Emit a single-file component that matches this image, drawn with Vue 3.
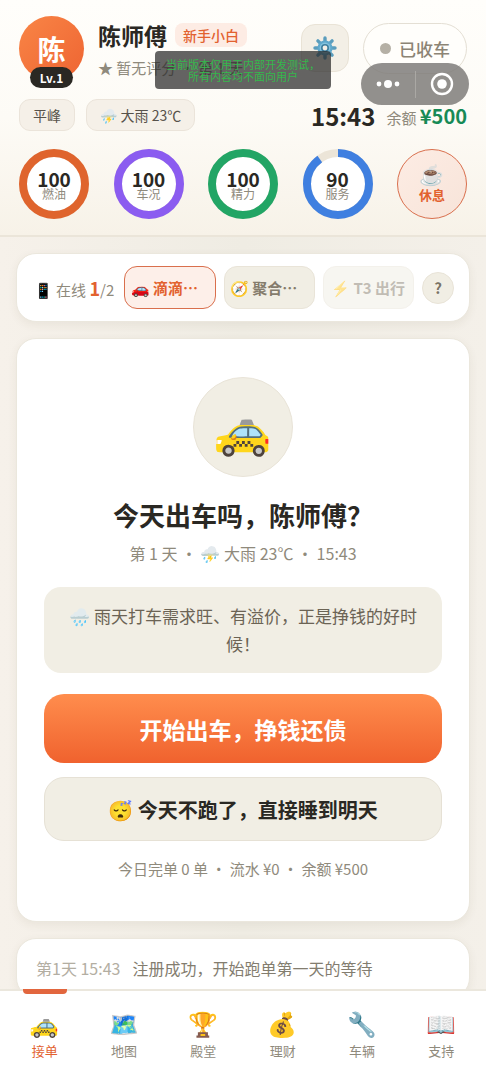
<template>
  <div class="app">
    <header class="top">
      <div class="profile">
        <div class="avatar">
          陈
          <span class="level">Lv.1</span>
        </div>
        <div class="who">
          <div class="name-row">
            <h1 class="name">{{ name }}</h1>
            <span class="badge">新手小白</span>
          </div>
          <p class="rating">★ 暂无评分 · 第 1 天</p>
        </div>
        <button class="setting" type="button" aria-label="设置">
          <svg width="24" height="24" viewBox="0 0 24 24">
            <g stroke="#5a9dbd" stroke-width="3.4" stroke-linecap="round">
              <path d="M12 2V22M2 12H22M4.9 4.9L19.1 19.1M19.1 4.9L4.9 19.1" />
            </g>
            <circle cx="12" cy="12" r="7.6" fill="#5fa8cc" />
            <circle cx="12" cy="12" r="5.4" fill="#84c3de" />
            <circle cx="12" cy="12" r="4" fill="#3f7f9f" />
            <circle cx="12" cy="12" r="2.4" fill="#f3efe6" />
          </svg>
        </button>
        <button class="status" type="button" @click="working = !working">
          <span class="dot" :class="{ on: working }"></span>{{ working ? '出车中' : '已收车' }}
        </button>
      </div>

      <div class="info">
        <span class="pill">平峰</span>
        <span class="pill">{{ weather }}</span>
        <span class="clock">{{ time }}</span>
        <span class="money">余额 <b>¥{{ balance }}</b></span>
      </div>

      <div class="rings">
        <div v-for="r in rings" :key="r.label" class="ring">
          <svg viewBox="0 0 70 70" class="ring-svg">
            <circle cx="35" cy="35" r="31" fill="#fff" stroke="#ece5d8" stroke-width="8" />
            <circle cx="35" cy="35" r="31" fill="none" :stroke="r.color" stroke-width="8" pathLength="100"
              :stroke-dasharray="r.value + ' 100'" transform="rotate(-90 35 35)" />
          </svg>
          <strong class="ring-num">{{ r.value }}</strong>
          <span class="ring-label">{{ r.label }}</span>
        </div>
        <button class="rest" type="button">
          <span class="rest-icon">☕</span>
          <span class="rest-text">休息</span>
        </button>
      </div>

      <!-- 小程序浮层 -->
      <div class="notice">当前版本仅用于内部开发测试，<br>所有内容均不面向用户</div>
      <div class="capsule">
        <button class="cap-btn" type="button" aria-label="更多">
          <svg width="24" height="12" viewBox="0 0 24 12">
            <circle cx="3" cy="6" r="2.4" fill="#fff" />
            <circle cx="12" cy="6" r="4" fill="#fff" />
            <circle cx="21" cy="6" r="2.4" fill="#fff" />
          </svg>
        </button>
        <span class="cap-line"></span>
        <button class="cap-btn" type="button" aria-label="关闭">
          <svg width="24" height="24" viewBox="0 0 24 24">
            <circle cx="12" cy="12" r="10" fill="none" stroke="#fff" stroke-width="2.4" />
            <circle cx="12" cy="12" r="4.8" fill="#fff" />
          </svg>
        </button>
      </div>
    </header>

    <main class="content">
      <section class="card platforms">
        <span class="online">📱 在线 <b>1</b>/2</span>
        <button v-for="p in platforms" :key="p.text" type="button" class="chip" :class="p.state">
          <span class="chip-icon">{{ p.icon }}</span>{{ p.text }}
        </button>
        <button class="help" type="button">?</button>
      </section>

      <section class="card hero">
        <div class="hero-icon">🚕</div>
        <h2 class="hero-title">今天出车吗，{{ name }}？</h2>
        <p class="hero-sub">第 1 天 · {{ weather }} · {{ time }}</p>
        <p class="tip">🌧️ 雨天打车需求旺、有溢价，正是挣钱的好时候！</p>
        <button class="btn primary" type="button" @click="working = true">开始出车，挣钱还债</button>
        <button class="btn plain" type="button">😴 今天不跑了，直接睡到明天</button>
        <p class="today">今日完单 0 单 · 流水 ¥0 · 余额 ¥{{ balance }}</p>
      </section>

      <section class="card log">
        <span class="log-time">第1天 {{ time }}</span>
        <span>注册成功，开始跑单第一天的等待</span>
      </section>
    </main>

    <nav class="tabs">
      <button v-for="(t, i) in tabs" :key="t.label" type="button" class="tab" :class="{ active: current === i }"
        @click="current = i">
        <span class="tab-icon">{{ t.icon }}</span>
        <span>{{ t.label }}</span>
      </button>
    </nav>
  </div>
</template>

<script setup>
import { ref } from 'vue';

const name = ref('陈师傅');
const weather = ref('⛈️ 大雨 23℃');
const time = ref('15:43');
const balance = ref(500);
const working = ref(false);
const current = ref(0);

const rings = ref([
  { label: '燃油', value: 100, color: '#df642d' },
  { label: '车况', value: 100, color: '#8b5cf0' },
  { label: '精力', value: 100, color: '#22a565' },
  { label: '服务', value: 90, color: '#3f7fe0' },
]);

const platforms = [
  { icon: '🚗', text: '滴滴…', state: 'on' },
  { icon: '🧭', text: '聚合…', state: '' },
  { icon: '⚡', text: 'T3 出行', state: 'locked' },
];

const tabs = [
  { icon: '🚕', label: '接单' },
  { icon: '🗺️', label: '地图' },
  { icon: '🏆', label: '殿堂' },
  { icon: '💰', label: '理财' },
  { icon: '🔧', label: '车辆' },
  { icon: '📖', label: '支持' },
];
</script>

<style>
body {
  margin: 0;
  background: #f3efe7;
}
</style>

<style scoped>
.app {
  display: flex;
  flex-direction: column;
  height: 100vh;
  overflow: hidden;
  color: #2a2823;
  background: linear-gradient(90deg, #f6f1ea, #efece3 50%, #f4f0e9);
  font-family: "Noto Sans CJK SC", "Noto Color Emoji", sans-serif;
}
.app * {
  box-sizing: border-box;
}
h1, h2, p {
  margin: 0;
}
button {
  padding: 0;
  border: none;
  font-family: inherit;
  color: inherit;
  cursor: pointer;
}

/* 顶部 */
.top {
  position: relative;
  flex: none;
  padding: 16px 19px;
  background: linear-gradient(#fffefb, #fdfbf6 50%, #f7f2e8);
  border-bottom: 2px solid #ebe5d9;
}
.profile {
  display: flex;
  align-items: center;
  height: 64px;
}
.avatar {
  position: relative;
  flex: none;
  width: 65px;
  height: 65px;
  border-radius: 50%;
  background: linear-gradient(135deg, #f98546, #ee6432);
  color: #fff;
  font-size: 28px;
  font-weight: bold;
  line-height: 66px;
  text-align: center;
}
.level {
  position: absolute;
  left: 11px;
  bottom: -7px;
  width: 43px;
  height: 21px;
  border-radius: 11px;
  background: #2a2823;
  font-size: 12px;
  line-height: 21px;
}
.who {
  flex: 1;
  min-width: 0;
  margin-left: 14px;
}
.name-row {
  display: flex;
  align-items: center;
  gap: 8px;
}
.name {
  font-size: 23px;
  line-height: 40px;
  white-space: nowrap;
}
.badge {
  flex: none;
  padding: 0 8px;
  border-radius: 8px;
  background: #fdece4;
  color: #e2622f;
  font-size: 14px;
  font-weight: 500;
  line-height: 24px;
}
.rating {
  color: #8f8a7c;
  font-size: 15px;
  line-height: 26px;
  white-space: nowrap;
}
.setting {
  display: flex;
  flex: none;
  align-items: center;
  justify-content: center;
  width: 48px;
  height: 48px;
  margin-right: 14px;
  border: 1px solid #e9e3d6;
  border-radius: 14px;
  background: #f3efe6;
}
.status {
  display: flex;
  flex: none;
  align-items: center;
  justify-content: center;
  gap: 8px;
  width: 104px;
  height: 51px;
  border: 1px solid #e4dfd4;
  border-radius: 26px;
  background: #fffefb;
  color: #8c8475;
  font-size: 17px;
  font-weight: 500;
}
.dot {
  width: 11px;
  height: 11px;
  border-radius: 50%;
  background: #b5b0a5;
}
.dot.on {
  background: #22a565;
}
.info {
  display: flex;
  align-items: center;
  height: 32px;
  margin-top: 19px;
}
.pill {
  margin-right: 11px;
  padding: 0 13px;
  border: 1px solid #ebe4da;
  border-radius: 11px;
  background: #f5f0e8;
  color: #57524a;
  font-size: 14px;
  line-height: 30px;
  white-space: nowrap;
}
.clock {
  margin-left: auto;
  font-size: 24px;
  font-weight: bold;
}
.money {
  margin-left: 11px;
  color: #8f8a7c;
  font-size: 15px;
}
.money b {
  color: #178a57;
  font-size: 20px;
}
.rings {
  display: flex;
  justify-content: space-between;
  margin-top: 18px;
}
.ring {
  display: grid;
  grid-template-rows: 39px 31px;
  justify-items: center;
  width: 70px;
  height: 70px;
}
.ring-svg {
  grid-area: 1 / 1 / 3 / 2;
  width: 70px;
  height: 70px;
}
.ring-num {
  grid-area: 1 / 1;
  align-self: end;
  font-size: 19px;
  line-height: 18px;
}
.ring-label {
  grid-area: 2 / 1;
  color: #8f8a7c;
  font-size: 12px;
  line-height: 12px;
}
.rest {
  display: flex;
  flex-direction: column;
  align-items: center;
  justify-content: center;
  width: 70px;
  height: 70px;
  border: 1px solid #d96f4d;
  border-radius: 50%;
  background: linear-gradient(135deg, #fdece4, #f7e4d9);
}
.rest-icon {
  font-size: 20px;
  line-height: 22px;
}
.rest-text {
  color: #e2622f;
  font-size: 13px;
  font-weight: bold;
  line-height: 20px;
}
.notice {
  position: absolute;
  top: 51px;
  left: 155px;
  width: 176px;
  padding: 7px 0;
  border-radius: 4px;
  background: rgba(40, 40, 40, 0.72);
  color: #35b84c;
  font-size: 11px;
  line-height: 12px;
  text-align: center;
}
.capsule {
  position: absolute;
  top: 63px;
  right: 17px;
  display: flex;
  align-items: center;
  width: 108px;
  height: 42px;
  border-radius: 21px;
  background: rgba(125, 123, 120, 0.84);
}
.cap-btn {
  display: flex;
  flex: 1;
  align-items: center;
  justify-content: center;
  height: 42px;
  background: none;
}
.cap-line {
  width: 1px;
  height: 27px;
  background: #aaa8a4;
}

/* 内容 */
.content {
  display: flex;
  flex: 1;
  flex-direction: column;
  gap: 16px;
  min-height: 0;
  padding: 16px 16px 0;
  overflow: hidden;
}
.card {
  flex: none;
  border: 1px solid #ebe7dd;
  border-radius: 20px;
  background: #fff;
  box-shadow: 0 3px 10px rgba(90, 75, 40, 0.07);
}
.platforms {
  display: flex;
  align-items: center;
  gap: 8px;
  height: 69px;
  padding: 0 15px 0 17px;
}
.online {
  flex: none;
  margin-right: 2px;
  color: #8f8a7c;
  font-size: 15px;
  white-space: nowrap;
}
.online b {
  color: #e2622f;
  font-size: 18px;
}
.chip {
  display: flex;
  flex: 1;
  align-items: center;
  gap: 3px;
  min-width: 0;
  height: 43px;
  padding: 0 6px;
  border: 1px solid #e9e4d8;
  border-radius: 13px;
  background: #f1eee4;
  color: #857c6c;
  font-size: 15px;
  font-weight: bold;
  white-space: nowrap;
}
.chip.on {
  border-color: #d96f4d;
  background: #fdefe9;
  color: #e2622f;
}
.chip.locked {
  justify-content: center;
  opacity: 0.5;
}
.help {
  flex: none;
  width: 32px;
  height: 32px;
  border: 1px solid #e9e4d8;
  border-radius: 50%;
  background: #f1eee4;
  color: #7b7466;
  font-size: 15px;
  font-weight: bold;
}
.hero {
  display: flex;
  flex-direction: column;
  align-items: center;
  padding: 38px 27px 40px;
  text-align: center;
}
.hero-icon {
  width: 100px;
  height: 100px;
  border: 1px solid #e9e4d8;
  border-radius: 50%;
  background: #f1eee4;
  font-size: 47px;
  line-height: 98px;
}
.hero-title {
  margin-top: 20px;
  font-size: 26px;
  line-height: 36px;
}
.hero-sub {
  margin-top: 8px;
  color: #8f8a7c;
  font-size: 16px;
  line-height: 24px;
}
.tip {
  width: 100%;
  margin-top: 22px;
  padding: 15px 18px;
  border-radius: 17px;
  background: #f1eee4;
  color: #6b6354;
  font-size: 17px;
  line-height: 28px;
}
.btn {
  width: 100%;
  border-radius: 20px;
  font-weight: bold;
}
.primary {
  height: 69px;
  margin-top: 21px;
  background: linear-gradient(#ff8d4d, #f0622e);
  color: #fff;
  font-size: 23px;
}
.plain {
  height: 64px;
  margin-top: 14px;
  border: 1px solid #e6e1d5;
  background: #f1eee4;
  font-size: 20px;
}
.today {
  margin-top: 16px;
  color: #8f8a7c;
  font-size: 15px;
  line-height: 24px;
}
.log {
  display: flex;
  gap: 12px;
  padding: 17px 19px;
  color: #837d6f;
  font-size: 16px;
  line-height: 24px;
}
.log-time {
  color: #b3aea2;
}

/* 底部导航 */
.tabs {
  display: flex;
  flex: none;
  height: 91px;
  padding: 0 5px;
  border-top: 2px solid #ebe7dd;
  background: #fff;
}
.tab {
  position: relative;
  display: flex;
  flex: 1;
  flex-direction: column;
  align-items: center;
  padding-top: 14px;
  background: none;
  color: #8f8a7c;
  font-size: 13px;
  line-height: 20px;
}
.tab-icon {
  font-size: 24px;
  line-height: 36px;
}
.tab.active {
  color: #e2622f;
}
.tab.active::before {
  content: "";
  position: absolute;
  top: -2px;
  left: calc(50% - 22px);
  width: 44px;
  height: 5px;
  border-radius: 0 0 4px 4px;
  background: #e2663e;
}
</style>
